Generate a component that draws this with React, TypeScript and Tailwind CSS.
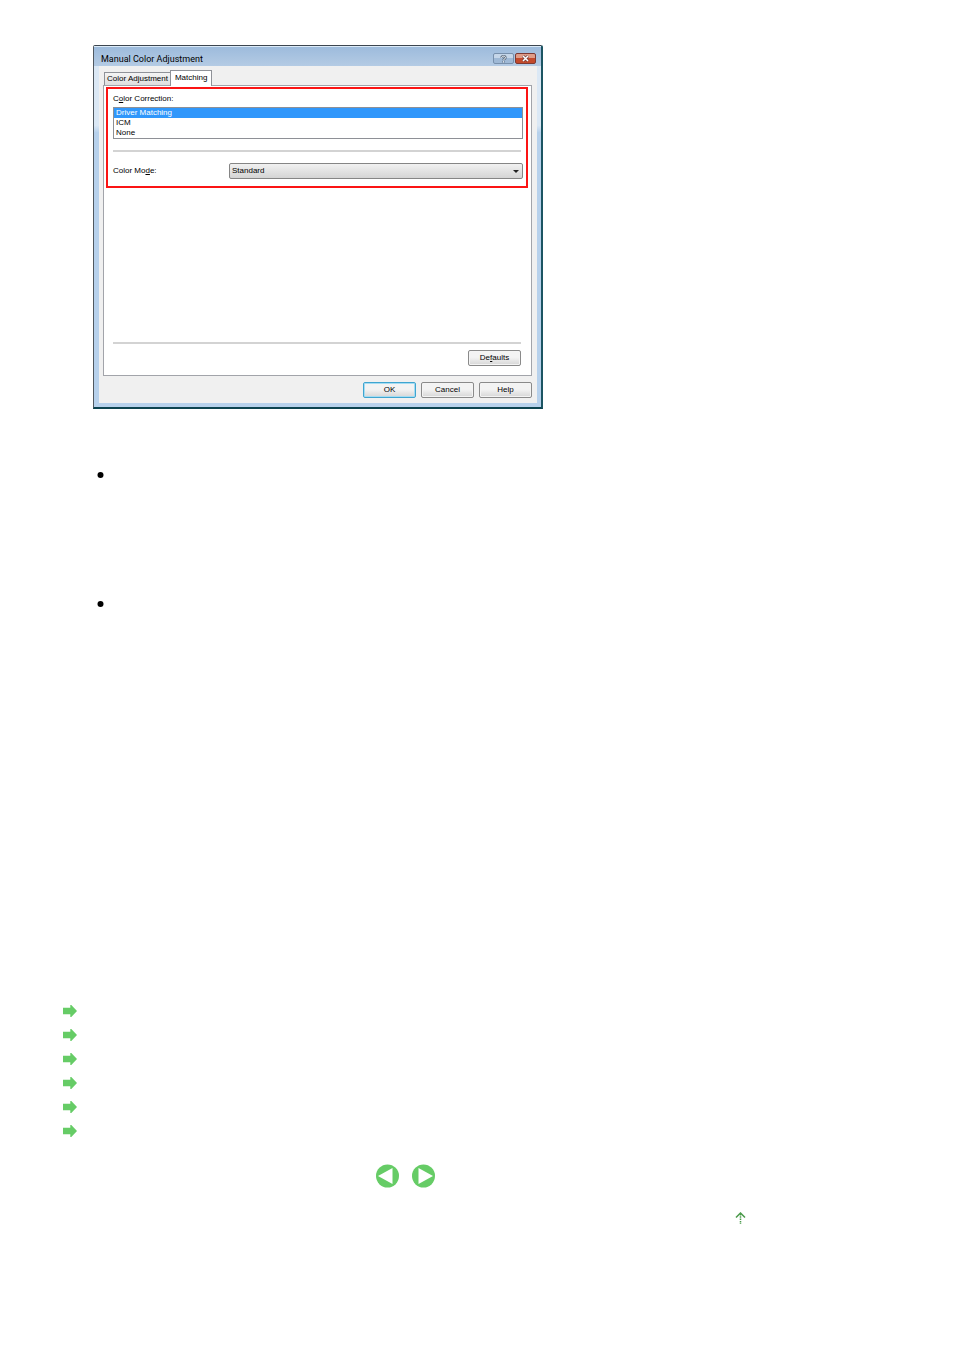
import { useState } from "react";
import clsx from "clsx";

const corrections = ["Driver Matching", "ICM", "None"];
const relatedTopics = [1, 2, 3, 4, 5, 6];

function DialogButton({
  children,
  primary = false,
}: {
  children: React.ReactNode;
  primary?: boolean;
}) {
  return (
    <button
      type="button"
      className={clsx(
        "flex h-4 w-[53px] items-center justify-center rounded-[2px] border bg-linear-to-b from-[#f3f3f3] from-45% to-[#d6d6d6] text-[8px] leading-3",
        primary
          ? "border-[#3fa5d0] shadow-[inset_0_0_0_1px_#a5dcf2]"
          : "border-[#8a8a8a] shadow-[inset_0_0_0_1px_#f4f4f4]"
      )}
    >
      <span>{children}</span>
    </button>
  );
}

function ColorDialog() {
  const [tab, setTab] = useState("Matching");
  const [correction, setCorrection] = useState("Driver Matching");

  return (
    <section
      aria-label="Manual Color Adjustment"
      className="w-full max-w-[450px] rounded-t-[2px] border-t border-r-2 border-b-2 border-l border-t-[#3c4650] border-r-[#1c5563] border-b-[#0c4350] border-l-[#505860] bg-linear-to-b from-[#dbe8f5] from-22% to-[#b7d1ec] to-24% pr-1 pb-1 pl-[5px] font-['Liberation_Sans',sans-serif] text-[8px] leading-3 text-black"
    >
      {/* Title bar */}
      <header className="-mr-1 -ml-[5px] flex h-5 items-center justify-between border-t border-[#dcebf8] bg-linear-to-b from-[#9dbbdc] to-[#b4cbe4] pr-[5px] pl-[7px] pt-1">
        <h1 className="font-[Roboto,sans-serif] text-[9px]">Manual Color Adjustment</h1>
        <div className="flex gap-px">
          <button
            type="button"
            aria-label="What's this?"
            className="flex h-[11px] w-[21px] items-center justify-center rounded-[2px] border border-[#7890ac] bg-linear-to-b from-[#c5d6e9] from-50% to-[#9fb9d6] to-50%"
          >
            <svg width="7" height="8" viewBox="0 0 7 8" fill="none">
              <path d="M1.5 2.8C1.5.6 5.5.6 5.5 2.8 5.5 4 3.5 3.8 3.5 5.2M3.5 6.2v1.3" stroke="#5b6b7e" strokeWidth="2.4" />
              <path d="M1.5 2.8C1.5.6 5.5.6 5.5 2.8 5.5 4 3.5 3.8 3.5 5.2M3.5 6.2v1.3" stroke="#f3f6fa" />
            </svg>
          </button>
          <button
            type="button"
            aria-label="Close"
            className="flex h-[11px] w-[21px] items-center justify-center rounded-[2px] border border-[#7c3a34] bg-linear-to-b from-[#df9c88] from-50% to-[#c34a2c] to-50%"
          >
            <svg width="9" height="7" viewBox="0 0 9 7" fill="none">
              <path d="M2 1l5 5M7 1L2 6" stroke="#6b3c3c" strokeWidth="2.8" />
              <path d="M2 1l5 5M7 1L2 6" stroke="#fff" strokeWidth="1.5" />
            </svg>
          </button>
        </div>
      </header>

      <div className="bg-[#f0f0f0] pt-1 pr-[5px] pb-[5px] pl-1">
        {/* Tabs */}
        <div role="tablist" className="flex items-end pl-px">
          {["Color Adjustment", "Matching"].map((name) => (
            <button
              key={name}
              type="button"
              role="tab"
              aria-selected={tab === name}
              onClick={() => setTab(name)}
              className={clsx(
                "border border-b-0 border-[#8f9298] whitespace-nowrap",
                tab === name
                  ? "-mb-px h-4 bg-white px-1 pb-px"
                  : "h-[13px] border-r-0 bg-linear-to-b from-[#f4f4f4] to-[#dedede] px-[2px]"
              )}
            >
              {name}
            </button>
          ))}
        </div>

        <div role="tabpanel" className="border border-[#a2a4aa] bg-white pt-px pr-[3px] pb-[9px] pl-[2px]">
          <div className="border-2 border-[#fb1414] pt-1 pr-[3px] pb-[7px] pl-[5px]">
            <p id="correction-label">
              C<u>o</u>lor Correction:
            </p>
            <div
              role="listbox"
              aria-labelledby="correction-label"
              className="mt-[2px] flex flex-col border border-[#8e9096]"
            >
              {corrections.map((name) => (
                <button
                  key={name}
                  type="button"
                  role="option"
                  aria-selected={correction === name}
                  onClick={() => setCorrection(name)}
                  className={clsx(
                    "h-[10px] px-[2px] text-left leading-[10px]",
                    correction === name && "bg-[#3097fb] text-white"
                  )}
                >
                  {name}
                </button>
              ))}
            </div>
            <hr className="mt-[11px] mr-[2px] h-[2px] border-0 bg-[#d3d3d3]" />
            <div className="mt-[11px] flex items-center">
              <label htmlFor="color-mode" className="w-[116px] shrink-0">
                Color Mo<u>d</u>e:
              </label>
              <div className="relative flex-1">
                <select
                  id="color-mode"
                  className="block h-4 w-full appearance-none rounded-[2px] border border-[#858585] bg-linear-to-b from-[#f1f1f1] to-[#d4d4d4] px-[2px] leading-3"
                >
                  <option>Standard</option>
                </select>
                <svg className="pointer-events-none absolute top-[7px] right-1" width="6" height="3" viewBox="0 0 6 3">
                  <path d="M0 0h6L3 3z" fill="#222" />
                </svg>
              </div>
            </div>
          </div>

          <hr className="mt-[154px] mr-[7px] ml-[7px] h-[2px] border-0 bg-[#d3d3d3]" />
          <div className="mt-[6px] flex justify-end pr-[7px]">
            <DialogButton>
              De<u>f</u>aults
            </DialogButton>
          </div>
        </div>

        <footer className="mt-[6px] flex justify-end gap-[5px]">
          <DialogButton primary>OK</DialogButton>
          <DialogButton>Cancel</DialogButton>
          <DialogButton>Help</DialogButton>
        </footer>
      </div>
    </section>
  );
}

export default function App() {
  return (
    <main className="min-h-screen bg-white px-[63px] pt-[45px] pb-[126px]">
      <div className="max-w-[685px]">
        <div className="pl-[30px]">
          <ColorDialog />
          <ul className="mt-[62px] pl-1">
            <li className="h-[129px]">
              <svg width="7" height="7" viewBox="0 0 7 7">
                <circle cx="3.5" cy="4" r="3" />
              </svg>
            </li>
            <li className="h-[399px]">
              <svg width="7" height="7" viewBox="0 0 7 7">
                <circle cx="3.5" cy="4" r="3" />
              </svg>
            </li>
          </ul>
        </div>

        {/* Related topics */}
        <ul>
          {relatedTopics.map((topic) => (
            <li key={topic} className="flex h-6 items-center">
              <a href="#" aria-label={`Topic ${topic}`}>
                <svg width="14" height="14" viewBox="0 0 14 14">
                  <path d="M0 3.8h7.3V1h1L14 7l-5.7 6h-1v-2.8H0z" fill="#66cc66" />
                </svg>
              </a>
            </li>
          ))}
        </ul>

        <nav className="mt-[21px] flex justify-center gap-[13px]">
          <a href="#" aria-label="Previous page">
            <svg width="23" height="24" viewBox="0 0 23 24">
              <circle cx="11.5" cy="12" r="11.5" fill="#66cc66" />
              <path d="M2 12L16.5 4v16z" fill="#fff" />
            </svg>
          </a>
          <a href="#" aria-label="Next page">
            <svg width="23" height="24" viewBox="0 0 23 24">
              <circle cx="11.5" cy="12" r="11.5" fill="#66cc66" />
              <path d="M21 12L6.5 4v16z" fill="#fff" />
            </svg>
          </a>
        </nav>

        <div className="mt-6 flex justify-end pr-[2px]">
          <a href="#" aria-label="Page top">
            <svg width="11" height="12" viewBox="0 0 11 12" fill="none" stroke="#4a9a4a">
              <path d="M1 5.5L5.5 1 10 5.5" strokeWidth="1.5" />
              <path d="M5.5 2v10" strokeWidth="1.5" strokeDasharray="1.5 .8" />
            </svg>
          </a>
        </div>
      </div>
    </main>
  );
}
